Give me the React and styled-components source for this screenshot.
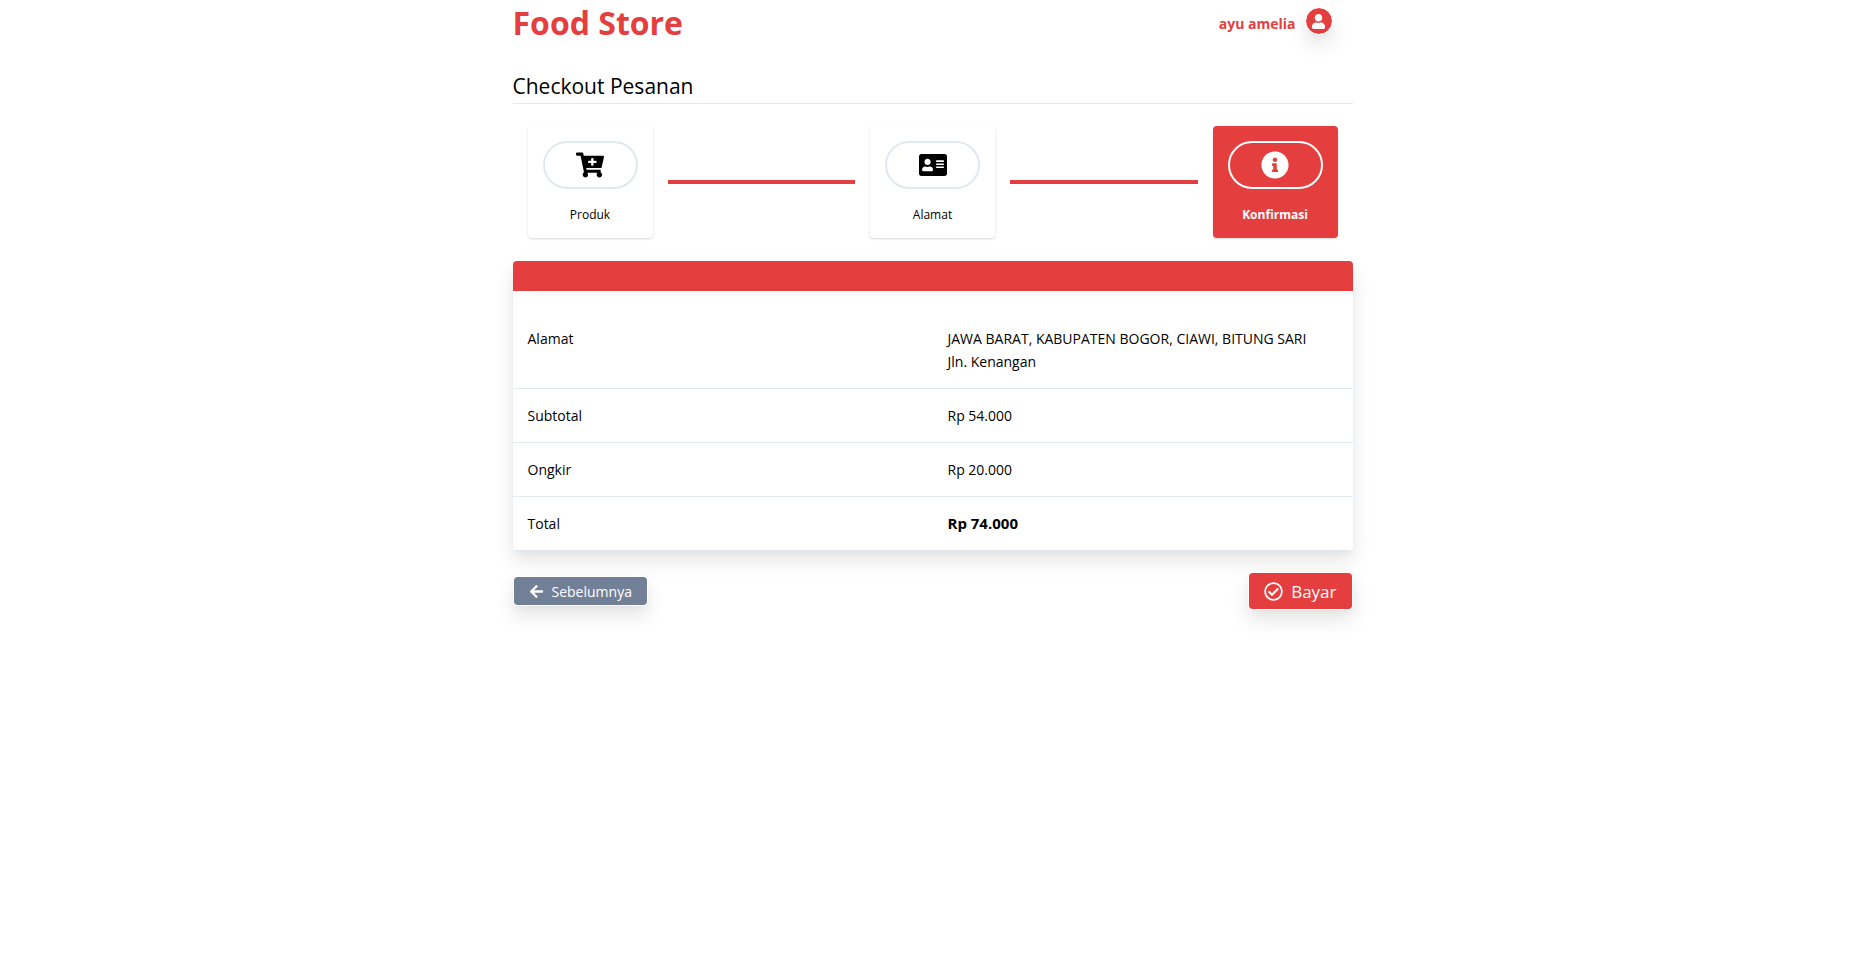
import styled, { createGlobalStyle } from "styled-components";
import {
  FaAddressCard,
  FaArrowLeft,
  FaCartPlus,
  FaInfoCircle,
  FaRegCheckCircle,
  FaUser,
} from "react-icons/fa";

const raised = "0 10px 20px rgba(0, 0, 0, 0.1), 0 3px 8px -2px rgba(0, 0, 0, 0.05)";

const GlobalStyle = createGlobalStyle`
  *, *::before, *::after {
    box-sizing: border-box;
  }
  body {
    margin: 0;
    background: #fff;
    color: #000;
    font-family: "Segoe UI", "Open Sans", "Noto Sans", sans-serif;
    font-size: 14px;
    line-height: 23px;
  }
`;

const Page = styled.div`
  display: flex;
  justify-content: center;
  padding: 0 0 40px 4px;
`;

const Container = styled.main`
  width: 100%;
  max-width: 840px;
`;

const TopBar = styled.header`
  display: flex;
  align-items: center;
  justify-content: space-between;
  height: 46px;
  padding-right: 20px;
`;

const Brand = styled.a`
  color: #e53e3e;
  font-size: 32px;
  font-weight: 700;
  line-height: 46px;
  text-decoration: none;
`;

const Account = styled.div`
  display: flex;
  align-items: center;
  gap: 9px;
  color: #e53e3e;
  font-size: 14px;
  font-weight: 700;
`;

const Avatar = styled.button`
  display: flex;
  align-items: center;
  justify-content: center;
  width: 28px;
  height: 28px;
  margin-bottom: 4px;
  padding: 0;
  border: 1px solid #fff;
  border-radius: 50%;
  background: #e53e3e;
  background-clip: padding-box;
  color: #fff;
  font-size: 15px;
  box-shadow: ${raised};
`;

const Title = styled.h1`
  margin: 23px 0 22px;
  border-bottom: 1px solid #e2e8f0;
  font-size: 21px;
  font-weight: 400;
  line-height: 34px;
`;

const Steps = styled.div`
  display: grid;
  grid-template-columns: 2fr 3fr 2fr 3fr 2fr;
  align-items: center;
  gap: 15px;
  padding: 0 15px;
`;

const StepCard = styled.div`
  display: flex;
  flex-direction: column;
  gap: 14px;
  height: 112px;
  padding: 15px;
  border-radius: 4px;
  background: ${({ $active }) => ($active ? "#e53e3e" : "#fff")};
  color: ${({ $active }) => ($active ? "#fff" : "#000")};
  font-size: 12px;
  font-weight: ${({ $active }) => ($active ? 700 : 400)};
  text-align: center;
  box-shadow: 0 1px 3px rgba(0, 0, 0, 0.1), 0 1px 2px rgba(0, 0, 0, 0.06);
`;

const StepIcon = styled.span`
  display: flex;
  flex: none;
  align-items: center;
  justify-content: center;
  height: 48px;
  border: 2px solid ${({ $active }) => ($active ? "#fff" : "#e2e8f0")};
  border-radius: 24px;
  font-size: 28px;
`;

const StepLine = styled.div`
  height: 4px;
  background: #e53e3e;
`;

const Summary = styled.div`
  margin-top: 23px;
  overflow: hidden;
  border-radius: 4px;
  background: #fff;
  box-shadow: ${raised};
`;

const SummaryHead = styled.div`
  height: 30px;
  margin-bottom: 21px;
  background: #e53e3e;
`;

const SummaryTable = styled.table`
  width: 100%;
  border-collapse: collapse;
  table-layout: fixed;
`;

const Row = styled.tr`
  border-bottom: 1px solid #e2e8f0;
`;

const Label = styled.th`
  width: 50%;
  padding: 15px;
  font-weight: 400;
  text-align: left;
  vertical-align: top;
`;

const Value = styled.td`
  padding: 15px;
  font-size: ${({ $strong }) => ($strong ? 15 : 14)}px;
  font-weight: ${({ $strong }) => ($strong ? 700 : 400)};
`;

const Actions = styled.div`
  display: flex;
  align-items: center;
  justify-content: space-between;
  margin-top: 21px;
`;

const Button = styled.button`
  display: flex;
  align-items: center;
  gap: 8px;
  height: ${({ $large }) => ($large ? 38 : 30)}px;
  padding: 0 15px;
  border: 1px solid #fff;
  border-radius: 4px;
  background: ${({ $large }) => ($large ? "#e53e3e" : "#718096")};
  background-clip: padding-box;
  color: #fff;
  font-family: inherit;
  font-size: ${({ $large }) => ($large ? 17 : 14)}px;
  box-shadow: ${raised};

  svg {
    width: ${({ $large }) => ($large ? 19 : 15)}px;
    height: ${({ $large }) => ($large ? 19 : 15)}px;
  }
`;

const steps = [
  { label: "Produk", icon: <FaCartPlus /> },
  { label: "Alamat", icon: <FaAddressCard /> },
  { label: "Konfirmasi", icon: <FaInfoCircle />, active: true },
];

const rows = [
  {
    label: "Alamat",
    value: (
      <>
        JAWA BARAT, KABUPATEN BOGOR, CIAWI, BITUNG SARI
        <br />
        Jln. Kenangan
      </>
    ),
  },
  { label: "Subtotal", value: "Rp 54.000" },
  { label: "Ongkir", value: "Rp 20.000" },
  { label: "Total", value: "Rp 74.000", strong: true },
];

const Stepper = () => (
  <Steps>
    {steps.flatMap(({ label, icon, active }, i) => [
      i > 0 && <StepLine key={`line-${label}`} />,
      <StepCard key={label} $active={active}>
        <StepIcon $active={active}>{icon}</StepIcon>
        {label}
      </StepCard>,
    ])}
  </Steps>
);

const App = () => {
  return (
    <Page>
      <GlobalStyle />
      <Container>
        <TopBar>
          <Brand href="#">Food Store</Brand>
          <Account>
            ayu amelia
            <Avatar type="button" aria-label="Account">
              <FaUser />
            </Avatar>
          </Account>
        </TopBar>
        <Title>Checkout Pesanan</Title>
        <Stepper />
        <Summary>
          <SummaryHead />
          <SummaryTable>
            <tbody>
              {rows.map(({ label, value, strong }) => (
                <Row key={label}>
                  <Label scope="row">{label}</Label>
                  <Value $strong={strong}>{value}</Value>
                </Row>
              ))}
            </tbody>
          </SummaryTable>
        </Summary>
        <Actions>
          <Button type="button">
            <FaArrowLeft />
            Sebelumnya
          </Button>
          <Button type="button" $large>
            <FaRegCheckCircle />
            Bayar
          </Button>
        </Actions>
      </Container>
    </Page>
  );
};

export default App;
